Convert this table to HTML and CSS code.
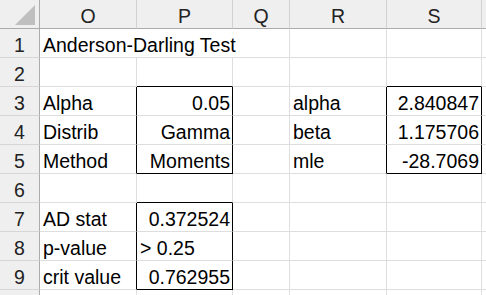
FILE: index.html
```html
<!DOCTYPE html>
<html lang="en">
  <head>
    <meta charset="UTF-8" />
    <title>Anderson-Darling Test</title>
    <link rel="stylesheet" href="styles.css">
  </head>
  <body>
    <div class="sheet">
      <!-- column headers -->
      <div class="corner">
        <svg width="39" height="28" viewBox="0 0 39 28">
          <polygon points="35,5 35,25 15,25" fill="#bfbfbf" />
        </svg>
      </div>
      <div class="col-head">O</div>
      <div class="col-head">P</div>
      <div class="col-head">Q</div>
      <div class="col-head">R</div>
      <div class="col-head">S</div>
      <div class="col-head"></div>

      <!-- row 1 -->
      <div class="row-head">1</div>
      <div class="cell wide">Anderson-Darling Test</div>
      <div class="cell"></div>
      <div class="cell"></div>
      <div class="cell"></div>

      <!-- row 2 -->
      <div class="row-head">2</div>
      <div class="cell"></div>
      <div class="cell edge-b"></div>
      <div class="cell"></div>
      <div class="cell"></div>
      <div class="cell edge-b"></div>
      <div class="cell"></div>

      <!-- row 3 -->
      <div class="row-head">3</div>
      <div class="cell edge-r">Alpha</div>
      <div class="cell num edge-r">0.05</div>
      <div class="cell"></div>
      <div class="cell edge-r">alpha</div>
      <div class="cell num edge-r">2.840847</div>
      <div class="cell"></div>

      <!-- row 4 -->
      <div class="row-head">4</div>
      <div class="cell edge-r">Distrib</div>
      <div class="cell num edge-r">Gamma</div>
      <div class="cell"></div>
      <div class="cell edge-r">beta</div>
      <div class="cell num edge-r">1.175706</div>
      <div class="cell"></div>

      <!-- row 5 -->
      <div class="row-head">5</div>
      <div class="cell edge-r">Method</div>
      <div class="cell num edge-r edge-b">Moments</div>
      <div class="cell"></div>
      <div class="cell edge-r">mle</div>
      <div class="cell num edge-r edge-b">-28.7069</div>
      <div class="cell"></div>

      <!-- row 6 -->
      <div class="row-head">6</div>
      <div class="cell"></div>
      <div class="cell edge-b"></div>
      <div class="cell"></div>
      <div class="cell"></div>
      <div class="cell"></div>
      <div class="cell"></div>

      <!-- row 7 -->
      <div class="row-head">7</div>
      <div class="cell edge-r">AD stat</div>
      <div class="cell num edge-r">0.372524</div>
      <div class="cell"></div>
      <div class="cell"></div>
      <div class="cell"></div>
      <div class="cell"></div>

      <!-- row 8 -->
      <div class="row-head">8</div>
      <div class="cell edge-r">p-value</div>
      <div class="cell edge-r">&gt; 0.25</div>
      <div class="cell"></div>
      <div class="cell"></div>
      <div class="cell"></div>
      <div class="cell"></div>

      <!-- row 9 -->
      <div class="row-head">9</div>
      <div class="cell edge-r">crit value</div>
      <div class="cell num edge-r edge-b">0.762955</div>
      <div class="cell"></div>
      <div class="cell"></div>
      <div class="cell"></div>
      <div class="cell"></div>

      <!-- row 10, only its top edge shows -->
      <div class="row-head"></div>
      <div class="cell"></div>
      <div class="cell"></div>
      <div class="cell"></div>
      <div class="cell"></div>
      <div class="cell"></div>
      <div class="cell"></div>
    </div>
  </body>
</html>
```

FILE: styles.css
```css
body {
  margin: 0;
  background: #ffffff;
  overflow: hidden;
  font-family: "Liberation Sans", Arial, sans-serif;
  font-size: 19.5px;
  color: #000000;
}

.sheet {
  display: grid;
  grid-template-columns: 40px 97px 96px 57px 97px 95px 1fr;
  grid-auto-rows: 29px;
  width: 486px;
  height: 295px;
  overflow: hidden;
}

.corner,
.col-head,
.row-head,
.cell {
  box-sizing: border-box;
  display: flex;
  align-items: flex-end;
  line-height: 22px;
  padding-bottom: 1px;
  white-space: nowrap;
  overflow: visible;
}

.corner {
  background: #efefef;
  border-right: 1px solid #ababab;
  border-bottom: 1px solid #ababab;
  padding: 0;
  align-items: flex-start;
}

.col-head {
  justify-content: center;
  background: #efefef;
  color: #222222;
  border-right: 1px solid #d2d2d2;
  border-bottom: 1px solid #ababab;
}

.row-head {
  justify-content: center;
  background: #efefef;
  color: #222222;
  border-right: 1px solid #ababab;
  border-bottom: 1px solid #d6d6d6;
}

.cell {
  padding-left: 3px;
  padding-right: 2px;
  border-right: 1px solid #dedede;
  border-bottom: 1px solid #dedede;
}

.wide {
  grid-column: span 3;
}

.num {
  justify-content: flex-end;
}

.edge-r {
  border-right-color: #000000;
}

.edge-b {
  border-bottom-color: #000000;
}
```
